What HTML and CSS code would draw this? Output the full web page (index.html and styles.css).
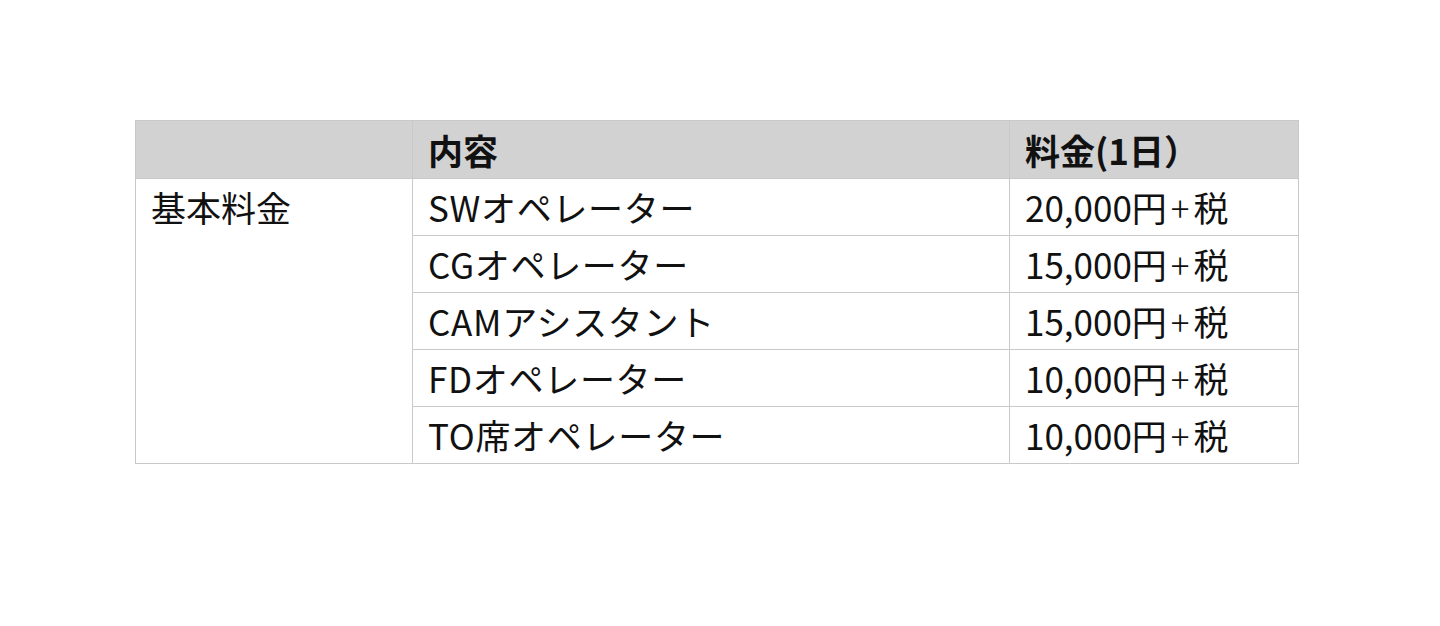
FILE: index.html
```html
<!DOCTYPE html>
<html lang="ja">
<head>
<meta charset="utf-8">
<link rel="stylesheet" href="styles.css">
</head>
<body>
<div class="page">
<table class="price">
<colgroup><col class="c1"><col class="c2"><col class="c3"></colgroup>
<thead>
<tr><th></th><th>内容</th><th>料金(1日）</th></tr>
</thead>
<tbody>
<tr><td rowspan="5" class="cat">基本料金</td><td class="item">SWオペレーター</td><td>20,000円<span class="plus">+</span>税</td></tr>
<tr><td class="item">CGオペレーター</td><td>15,000円<span class="plus">+</span>税</td></tr>
<tr><td class="item">CAMアシスタント</td><td>15,000円<span class="plus">+</span>税</td></tr>
<tr><td class="item">FDオペレーター</td><td>10,000円<span class="plus">+</span>税</td></tr>
<tr><td class="item">TO席オペレーター</td><td>10,000円<span class="plus">+</span>税</td></tr>
</tbody>
</table>
</div>
</body>
</html>
```
FILE: styles.css
```css
html, body { margin: 0; padding: 0; background: #fff; }
body { font-family: "Noto Sans CJK JP", "Noto Sans", sans-serif; color: #111; }
.page { padding: 120px 0 0 135px; }
.price { border-collapse: collapse; table-layout: fixed; width: 1163px; font-size: 35px; }
.c1 { width: 277px; }
.c2 { width: 597px; }
.c3 { width: 289px; }
.price th, .price td {
  border: 1px solid #c9c9c9;
  height: 57px;
  padding: 0 15px;
  text-align: left;
  vertical-align: middle;
  line-height: 40px;
  box-sizing: border-box;
  white-space: nowrap;
  font-weight: 400;
}
.price th { background: #d2d2d2; font-weight: 700; height: 58px; }
.price td.cat { vertical-align: top; padding-top: 8px; }
.price td.item { letter-spacing: 0.02em; }
.plus { margin: 0 4px; font-weight: 300; }
```
